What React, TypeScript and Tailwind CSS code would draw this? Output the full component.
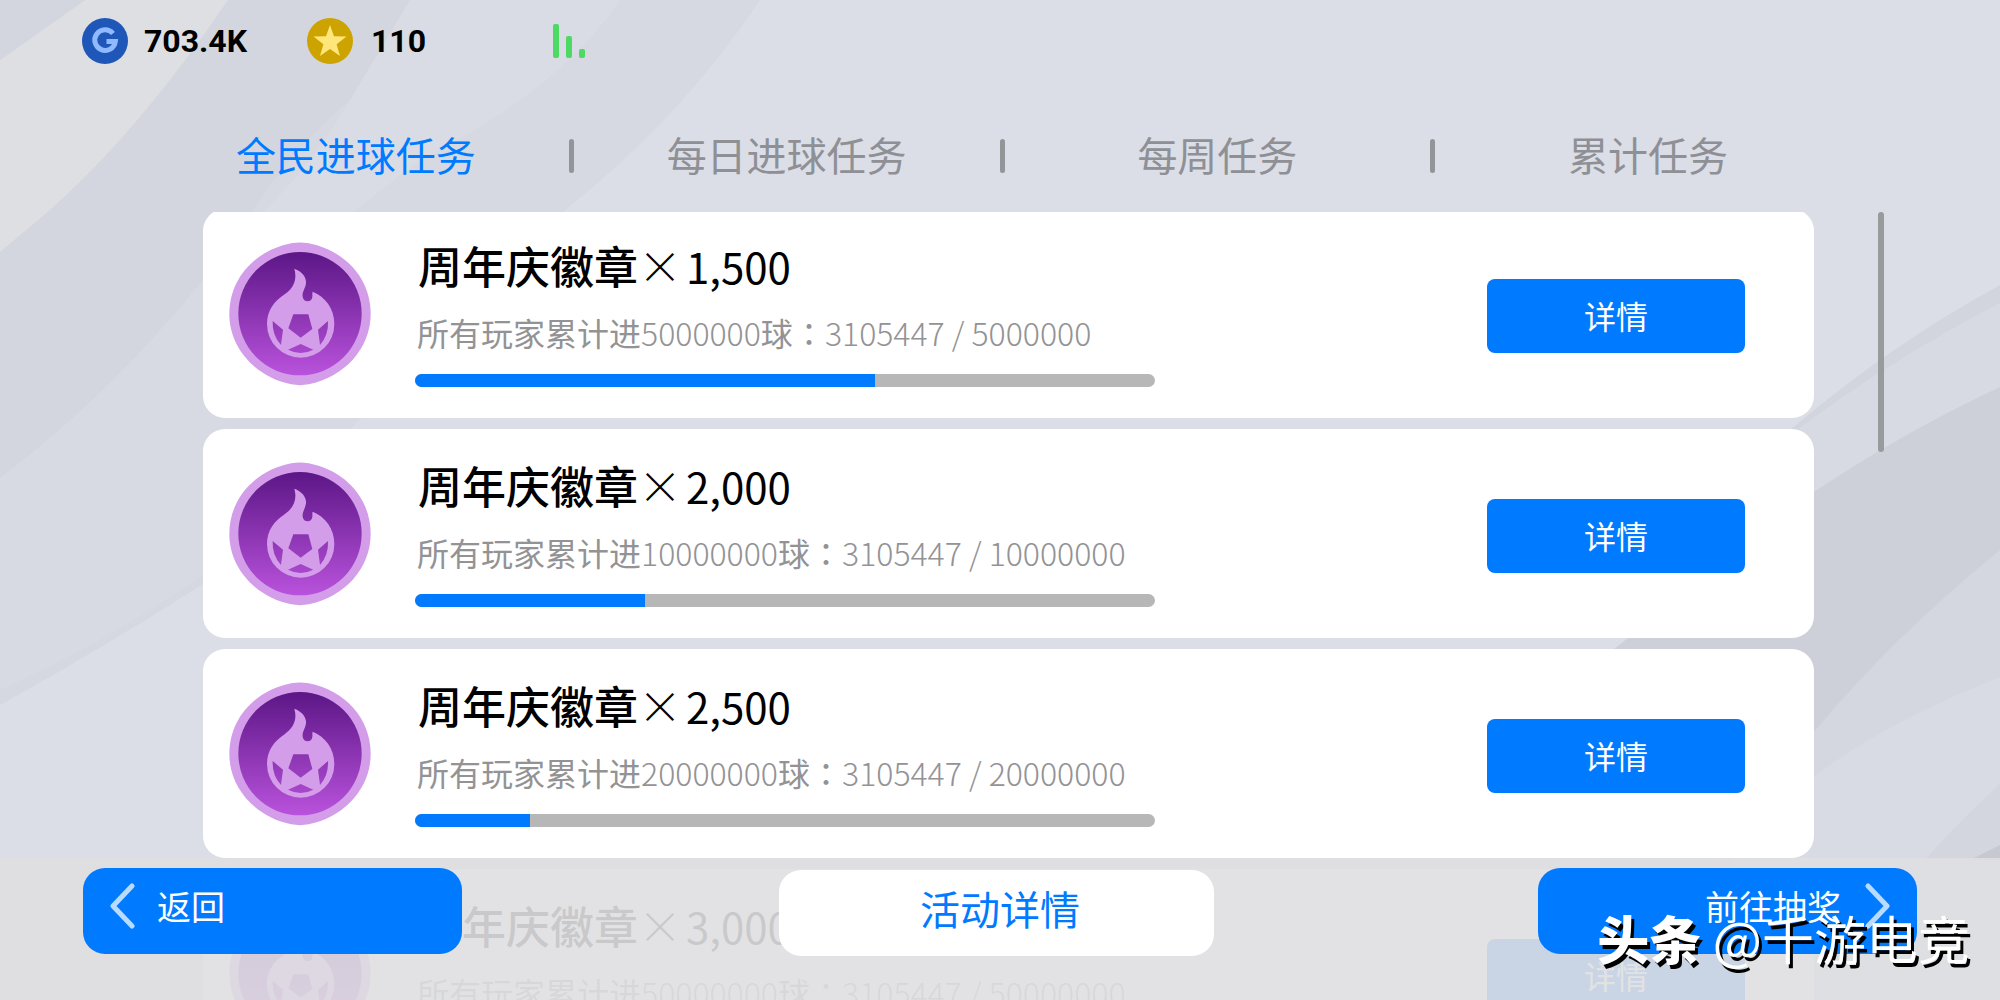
import { useId, useState } from 'react';

interface Task {
    id: number;
    reward: string;
    goal: number;
}

const PROGRESS = 3105447;

const TABS = ['全民进球任务', '每日进球任务', '每周任务', '累计任务'];

const TASKS: Task[] = [
    { id: 1, reward: '1,500', goal: 5000000 },
    { id: 2, reward: '2,000', goal: 10000000 },
    { id: 3, reward: '2,500', goal: 20000000 },
    { id: 4, reward: '3,000', goal: 50000000 },
];

const Background = () => (
    <svg className="absolute inset-0 w-full h-full" viewBox="0 0 2000 1000" preserveAspectRatio="none" aria-hidden="true">
        <rect width="2000" height="1000" fill="#dbdee6" />
        {/* top left folds */}
        <path d="M0 0H760Q680 120 565 210L203 580Q100 650 0 704Z" fill="#d7dae2" />
        <path d="M0 0H620L335 210L203 280Q110 395 0 478Z" fill="#d3d6de" />
        <path d="M350 100L620 0H760Q680 120 540 230H240Q290 150 350 100Z" fill="#d6d9e1" />
        <path d="M350 100L410 0H620Q560 90 420 160L330 230H245Q310 170 350 100Z" fill="#d9dce4" />
        <path d="M85 0H228Q140 130 50 210L0 252V60Z" fill="#dedfe3" />
        <path d="M0 0H85L0 60Z" fill="#d3d6de" />
        <path d="M0 690Q110 640 203 575V584Q100 650 0 705Z" fill="#d5d8e0" />
        {/* right side folds */}
        <path d="M2000 285Q1890 345 1790 430L1600 1000H2000Z" fill="#d2d5dd" />
        <path d="M2000 303Q1890 360 1797 430L1600 1000H2000Z" fill="#d7dae2" />
        <path d="M2000 387Q1900 434 1814 492L1600 660V1000H2000Z" fill="#cdd0d8" />
        <path d="M2000 550Q1890 640 1814 732L1600 1000H2000Z" fill="#d4d7df" />
        <path d="M2000 677Q1880 725 1814 777L1600 1000H2000Z" fill="#d8dbe3" />
        <path d="M2000 784Q1960 820 1925 860H2000Z" fill="#d3d6de" />
        <path d="M2000 845L1970 860H2000Z" fill="#c6c9d1" />
    </svg>
);

const BadgeIcon = () => {
    const id = useId();
    const fill = `url(#${id})`;
    return (
        <svg className="w-36 h-36 shrink-0" viewBox="0 0 432 432" aria-hidden="true">
            <defs>
                <linearGradient id={id} gradientUnits="userSpaceOnUse" x1="0" y1="30" x2="0" y2="400">
                    <stop offset="0" stopColor="#5c1686" />
                    <stop offset="1" stopColor="#b952dc" />
                </linearGradient>
            </defs>
            <path d="M190 4Q216 -1 242 4C350 25 428 108 428 216C428 318 350 405 242 427Q216 432 190 427C82 405 4 318 4 216C4 108 82 25 190 4Z" fill="#d49dea" />
            <circle cx="216" cy="215" r="185" fill={fill} />
            <path d="M199 80C222 88 236 106 234 124C232 140 222 150 224 164C226 182 252 182 253 164C254 158 252 154 254 149C292 164 319 200 319 246A101 101 0 0 1 117 246C117 204 140 176 168 158C198 138 208 112 199 80Z" fill="#d49dea" />
            <path d="M196 217H241L253 261L218 287L181 259Z" fill={fill} />
            <path d="M134 237L165 263L159 309Q132 280 134 237Z" fill={fill} />
            <path d="M300 237L270 263L276 309Q302 280 300 237Z" fill={fill} />
            <path d="M180 323L218 306L256 323Q218 343 180 323Z" fill={fill} />
        </svg>
    );
};

const TaskCard = ({ task }: { task: Task }) => (
    <li className="flex bg-white rounded-[22px] pl-[25px] pr-[69px]">
        <div className="flex items-center">
            <BadgeIcon />
        </div>
        <div className="ml-[43px] w-[740px] pt-[30px] pb-[31px]">
            <h2 className="pl-[3px] text-[44px] leading-[52px] font-medium text-black whitespace-nowrap">
                周年庆徽章<span className="font-light">×</span>
                <span className="ml-1 text-[42px] font-normal">{task.reward}</span>
            </h2>
            <p className="mt-5 pl-[2px] text-[32px] leading-10 text-[#939396] whitespace-nowrap">
                所有玩家累计进<span className="font-light">{task.goal}</span>球
                <span lang="zh-TW" className="font-['Noto_Sans_CJK_TC',sans-serif]">：</span>
                <span className="font-light">{PROGRESS} / {task.goal}</span>
            </p>
            <div className="mt-[22px] h-[13px] rounded-full bg-[#b7b7b7] overflow-hidden">
                <div className="h-full bg-[#007aff]" style={{ width: `${(PROGRESS / task.goal) * 100}%` }} />
            </div>
        </div>
        <button type="button" className="ml-auto mt-1 self-center w-[258px] h-[74px] pb-[2px] rounded-lg bg-[#007aff] text-white text-[32px] leading-10">
            详情
        </button>
    </li>
);

const App = () => {
    const [active, setActive] = useState(0);

    return (
        <div lang="zh-CN" className="relative flex flex-col h-screen overflow-hidden font-['Noto_Sans_CJK_SC',sans-serif]">
            <Background />

            <header className="relative flex items-center pl-[82px] pt-[18px] font-['Roboto','Noto_Sans_CJK_SC',sans-serif] font-bold text-[32px] leading-[46px] text-black">
                <svg className="w-[46px] h-[46px]" viewBox="0 0 46 46" aria-hidden="true">
                    <circle cx="23" cy="23" r="23" fill="#1f57b8" />
                    <path d="M31 15.5A10.3 10.3 0 1 0 33.3 23.6H24.5" fill="none" stroke="#8fbaff" strokeWidth="5" />
                </svg>
                <span className="ml-4 w-[146px]">703.4K</span>
                <svg className="w-[46px] h-[46px] ml-[17px]" viewBox="0 0 46 46" aria-hidden="true">
                    <circle cx="23" cy="23" r="23" fill="#cda300" />
                    <path d="M23 7L27 18.2L39.5 18.5L29.6 26.2L33 38L23 31L13 38L16.4 26.2L6.5 18.5L19 18.2Z" fill="#ffe67a" />
                </svg>
                <span className="ml-[18px] w-28">110</span>
                <svg className="w-8 h-[34px] ml-[70px]" viewBox="0 0 32 34" aria-hidden="true">
                    <rect width="6" height="34" rx="2" fill="#4cd964" />
                    <rect x="13" y="12" width="6" height="22" rx="2" fill="#4cd964" />
                    <rect x="26" y="25" width="6" height="9" rx="2" fill="#4cd964" />
                </svg>
            </header>

            <nav className="relative flex mt-[62px] ml-[143px] mr-[134px]">
                {TABS.map((tab, i) => (
                    <div key={tab} className="flex-1 flex items-center">
                        <button
                            type="button"
                            onClick={() => setActive(i)}
                            className={`flex-1 pb-1 text-[40px] leading-14 whitespace-nowrap ${i === active ? 'text-[#007aff]' : 'text-[#8f9095]'}`}
                        >
                            {tab}
                        </button>
                        <span className={`w-[5px] h-[34px] rounded-sm ${i < TABS.length - 1 ? 'bg-[#949599]' : ''}`} />
                    </div>
                ))}
            </nav>

            <main className="relative flex-1 min-h-0 flex gap-16 mt-[26px] pl-[203px] pr-[116px]">
                <div className="flex-1 overflow-hidden">
                    <ul className="-mt-[3px] flex flex-col gap-[11px]">
                        {TASKS.map(task => <TaskCard key={task.id} task={task} />)}
                    </ul>
                </div>
                <div className="w-[6px] h-60 rounded-full bg-[#999a9b]" />
            </main>

            {/* bottom bar floats over the list */}
            <footer className="absolute inset-x-0 bottom-0 h-[142px] pt-[10px] px-[83px] bg-[#dfdfe1]/90">
                <div className="flex justify-between">
                    <button type="button" className="flex items-center w-[379px] h-[86px] pl-[26px] pb-[10px] gap-[22px] rounded-[22px] bg-[#007aff] text-white text-[34px] leading-10">
                        <svg className="w-[26px] h-[46px]" viewBox="0 0 26 46" fill="none" stroke="#b8dbff" strokeWidth="5" strokeLinecap="round" strokeLinejoin="round" aria-hidden="true">
                            <path d="M23 3L4 23L23 43" />
                        </svg>
                        返回
                    </button>
                    <button type="button" className="w-[435px] h-[86px] mt-[2px] -ml-2 pb-[10px] rounded-[22px] bg-white text-[#007aff] text-[40px] leading-[48px] pl-2">
                        活动详情
                    </button>
                    <button type="button" className="flex items-center justify-end w-[379px] h-[86px] pr-[26px] pb-[10px] gap-6 rounded-[22px] bg-[#007aff] text-white text-[34px] leading-10">
                        前往抽奖
                        <svg className="w-[26px] h-[46px]" viewBox="0 0 26 46" fill="none" stroke="#b8dbff" strokeWidth="5" strokeLinecap="round" strokeLinejoin="round" aria-hidden="true">
                            <path d="M3 3L22 23L3 43" />
                        </svg>
                    </button>
                </div>
            </footer>

            <div className="absolute right-[30px] bottom-[30px] text-[52px] leading-[64px] text-white whitespace-nowrap [text-shadow:3px_4px_0_#000]">
                <span className="font-black">头条</span> @千游电竞
            </div>
        </div>
    );
};

export default App;
